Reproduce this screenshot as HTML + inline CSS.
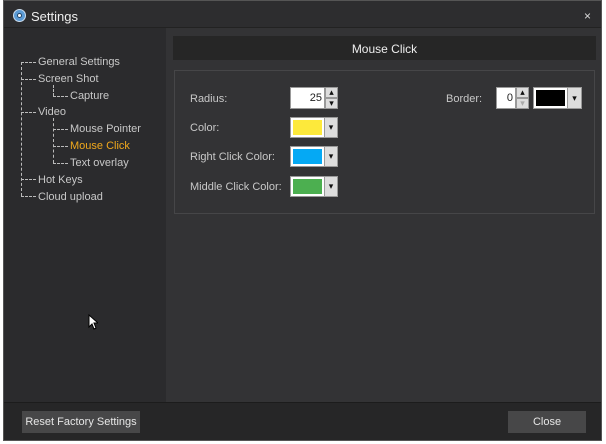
<!DOCTYPE html><html><head><style>
*{margin:0;padding:0;box-sizing:border-box}
body{width:606px;height:444px;background:#fff;font-family:"Liberation Sans",sans-serif;font-size:11px;color:#c8c8c8;position:relative;overflow:hidden}
.abs{position:absolute}
.win{left:3px;top:0;width:599px;height:441px;background:#2d2d2f;border:1px solid #555}
.t{white-space:nowrap}
.dash{border-left:1px dashed #bbb}
.h{border-top:1px dashed #bbb;height:0}
.box{background:#fff;border:1px solid #999}
.dd{background:#ddd;border:1px solid #999;color:#111;font-size:9px;text-align:center}
</style></head><body>
<div class="abs win"></div>
<div class="abs" style="left:13px;top:9px;width:13px;height:13px;border-radius:50%;background:#5b9bd5;border:1px solid #cde"></div>
<div class="abs" style="left:17px;top:13px;width:5px;height:5px;border-radius:50%;background:#fff;border:1px solid #246"></div>
<div class="abs t" style="left:31px;top:9px;font-size:13px;color:#eee">Settings</div>
<div class="abs t" style="left:584px;top:9px;font-size:12px;color:#ddd">×</div>
<div class="abs" style="left:4px;top:27px;width:597px;height:1px;background:#222"></div>
<div class="abs" style="left:4px;top:28px;width:162px;height:374px;background:#2b2b2d"></div>
<div class="abs" style="left:166px;top:28px;width:435px;height:374px;background:#333335"></div>
<div class="abs dash" style="left:21px;top:62px;height:134px"></div>
<div class="abs h" style="left:21px;top:62px;width:15px"></div>
<div class="abs h" style="left:21px;top:79px;width:15px"></div>
<div class="abs h" style="left:21px;top:112px;width:15px"></div>
<div class="abs h" style="left:21px;top:179px;width:15px"></div>
<div class="abs h" style="left:21px;top:196px;width:15px"></div>
<div class="abs dash" style="left:53px;top:85px;height:11px"></div>
<div class="abs h" style="left:53px;top:96px;width:15px"></div>
<div class="abs dash" style="left:53px;top:118px;height:45px"></div>
<div class="abs h" style="left:53px;top:129px;width:15px"></div>
<div class="abs h" style="left:53px;top:146px;width:15px"></div>
<div class="abs h" style="left:53px;top:163px;width:15px"></div>
<div class="abs t" style="left:38px;top:56px">General Settings</div>
<div class="abs t" style="left:38px;top:73px">Screen Shot</div>
<div class="abs t" style="left:70px;top:90px">Capture</div>
<div class="abs t" style="left:38px;top:106px">Video</div>
<div class="abs t" style="left:70px;top:123px">Mouse Pointer</div>
<div class="abs t" style="left:70px;top:140px;color:#f0a81c">Mouse Click</div>
<div class="abs t" style="left:70px;top:157px">Text overlay</div>
<div class="abs t" style="left:38px;top:174px">Hot Keys</div>
<div class="abs t" style="left:38px;top:191px">Cloud upload</div>
<svg class="abs" style="left:88px;top:314px" width="10" height="16"><path d="M1 1 L1 13 L4 10 L6 15 L8 14 L6 9 L10 9 Z" fill="#fff" stroke="#000" stroke-width="1"/></svg>
<div class="abs" style="left:173px;top:36px;width:423px;height:24px;background:#262626"></div>
<div class="abs t" style="left:173px;top:42px;width:423px;text-align:center;font-size:12px;color:#eee">Mouse Click</div>
<div class="abs" style="left:174px;top:70px;width:421px;height:144px;border:1px solid #464648"></div>
<div class="abs t" style="left:190px;top:93px">Radius:</div>
<div class="abs t" style="left:190px;top:122px">Color:</div>
<div class="abs t" style="left:190px;top:151px">Right Click Color:</div>
<div class="abs t" style="left:190px;top:181px">Middle Click Color:</div>
<div class="abs t" style="left:446px;top:93px">Border:</div>
<div class="abs box" style="left:290px;top:87px;width:35px;height:22px;color:#222;text-align:right;padding:4px 2px 0 0">25</div>
<div class="abs dd" style="left:325px;top:87px;width:13px;height:11px;line-height:9px">▴</div>
<div class="abs dd" style="left:325px;top:98px;width:13px;height:11px;line-height:9px">▾</div>
<div class="abs box" style="left:496px;top:87px;width:20px;height:22px;color:#222;text-align:right;padding:4px 2px 0 0">0</div>
<div class="abs dd" style="left:516px;top:87px;width:13px;height:11px;line-height:9px">▴</div>
<div class="abs dd" style="left:516px;top:98px;width:13px;height:11px;line-height:9px;color:#aaa">▾</div>
<div class="abs box" style="left:533px;top:87px;width:35px;height:22px;padding:2px"><div style="background:#000;width:100%;height:100%"></div></div>
<div class="abs dd" style="left:567px;top:87px;width:15px;height:22px;line-height:20px">▾</div>
<div class="abs box" style="left:290px;top:117px;width:35px;height:21px;padding:2px"><div style="background:#fde93b;width:100%;height:100%"></div></div>
<div class="abs dd" style="left:324px;top:117px;width:14px;height:21px;line-height:19px">▾</div>
<div class="abs box" style="left:290px;top:146px;width:35px;height:21px;padding:2px"><div style="background:#05a9f4;width:100%;height:100%"></div></div>
<div class="abs dd" style="left:324px;top:146px;width:14px;height:21px;line-height:19px">▾</div>
<div class="abs box" style="left:290px;top:176px;width:35px;height:21px;padding:2px"><div style="background:#4caf50;width:100%;height:100%"></div></div>
<div class="abs dd" style="left:324px;top:176px;width:14px;height:21px;line-height:19px">▾</div>
<div class="abs" style="left:4px;top:402px;width:597px;height:1px;background:#1c1c1c"></div>
<div class="abs" style="left:4px;top:403px;width:597px;height:37px;background:#262627"></div>
<div class="abs t" style="left:22px;top:411px;width:118px;height:22px;background:#474748;text-align:center;line-height:23px;color:#e6e6e6">Reset Factory Settings</div>
<div class="abs t" style="left:508px;top:411px;width:78px;height:22px;background:#474748;text-align:center;line-height:23px;color:#e6e6e6">Close</div>
</body></html>
